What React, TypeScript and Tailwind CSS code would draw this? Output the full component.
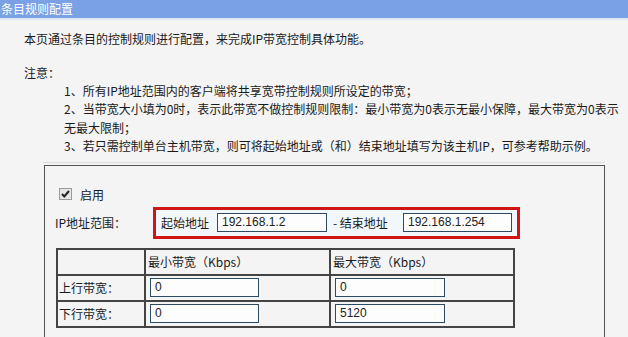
const cjk = { fontFamily: '"Noto Sans CJK SC", "Liberation Sans", sans-serif' };
const latin = { fontFamily: '"Liberation Sans", Arial, sans-serif' };

const notes = [
  "1、所有IP地址范围内的客户端将共享宽带控制规则所设定的带宽；",
  "2、当带宽大小填为0时，表示此带宽不做控制规则限制：最小带宽为0表示无最小保障，最大带宽为0表示无最大限制；",
  "3、若只需控制单台主机带宽，则可将起始地址或（和）结束地址填写为该主机IP，可参考帮助示例。",
];

const Field = ({ value, width }: { value: string; width: string }) => (
  <div
    className={`${width} h-[19px] border border-[#2d4b62] bg-[#fdfdfd] pl-[4px] text-[12px] leading-[17px] text-[#222]`}
    style={latin}
  >
    {value}
  </div>
);

const CheckBox = () => (
  <svg width="13" height="12" viewBox="0 0 13 12">
    <rect x="0.5" y="0.5" width="12" height="11" fill="#e6e6e6" stroke="#9a9a9a" />
    <path d="M3 6 L5.3 8.5 L10 3" fill="none" stroke="#222" strokeWidth="2" />
  </svg>
);

export default function App() {
  return (
    <div className="w-[628px] h-[337px] overflow-hidden bg-[#f4f4f4] text-[12px] text-[#1a1a1a]" style={cjk}>
      {/* title bar */}
      <div className="h-[18px] bg-[#7aa1e4] text-white text-[12px] leading-[18px] pl-[1px]">条目规则配置</div>
      <div className="h-[2px] bg-[#dfe7f3]" />

      <div className="pl-[24px] pt-[10px] leading-[18px]">本页通过条目的控制规则进行配置，来完成IP带宽控制具体功能。</div>
      <div className="pl-[24px] pt-[16px] leading-[18px]">注意：</div>
      <div className="pl-[64px] w-[624px] leading-[18.4px]">
        {notes.map((n, i) => (
          <p key={i}>{n}</p>
        ))}
      </div>

      {/* rule box */}
      <div className="ml-[43px] mr-[23px] mt-[6px] border-t border-[#dcdcdc] pt-[2px]">
        <div className="ml-[1px] h-[200px] border border-[#555] pl-[10px] pt-[22px]">
          <div className="flex items-center h-[13px] pl-[4px] gap-[8px]">
            <CheckBox />
            <span className="leading-[13px]">启用</span>
          </div>

          <div className="flex items-center mt-[6px]">
            <span className="w-[98px]">IP地址范围：</span>
            <div className="flex items-center h-[32px] border-[3px] border-[#cf1515] bg-[#f2f7fb] px-[5px]">
              <span className="w-[56px]">起始地址</span>
              <Field value="192.168.1.2" width="w-[110px]" />
              <span className="ml-[6px] w-[70px]">- 结束地址</span>
              <Field value="192.168.1.254" width="w-[109px]" />
            </div>
          </div>

          <table className="mt-[9px] ml-[1px] table-fixed border-collapse border-2 border-[#444]">
            <colgroup>
              <col className="w-[88px]" />
              <col className="w-[185px]" />
              <col className="w-[184px]" />
            </colgroup>
            <tbody>
              <tr className="h-[26px]">
                <td className="border-2 border-[#444]" />
                <td className="border-2 border-[#444] pl-[2px]">最小带宽（Kbps）</td>
                <td className="border-2 border-[#444] pl-[2px]">最大带宽（Kbps）</td>
              </tr>
              {[
                ["上行带宽：", "0", "0"],
                ["下行带宽：", "0", "5120"],
              ].map(([label, min, max]) => (
                <tr key={label} className="h-[26px]">
                  <td className="border-2 border-[#444] pl-[1px]">{label}</td>
                  <td className="border-2 border-[#444] pl-[4px]">
                    <Field value={min} width="w-[109px]" />
                  </td>
                  <td className="border-2 border-[#444] pl-[4px]">
                    <Field value={max} width="w-[110px]" />
                  </td>
                </tr>
              ))}
            </tbody>
          </table>
        </div>
      </div>
    </div>
  );
}
